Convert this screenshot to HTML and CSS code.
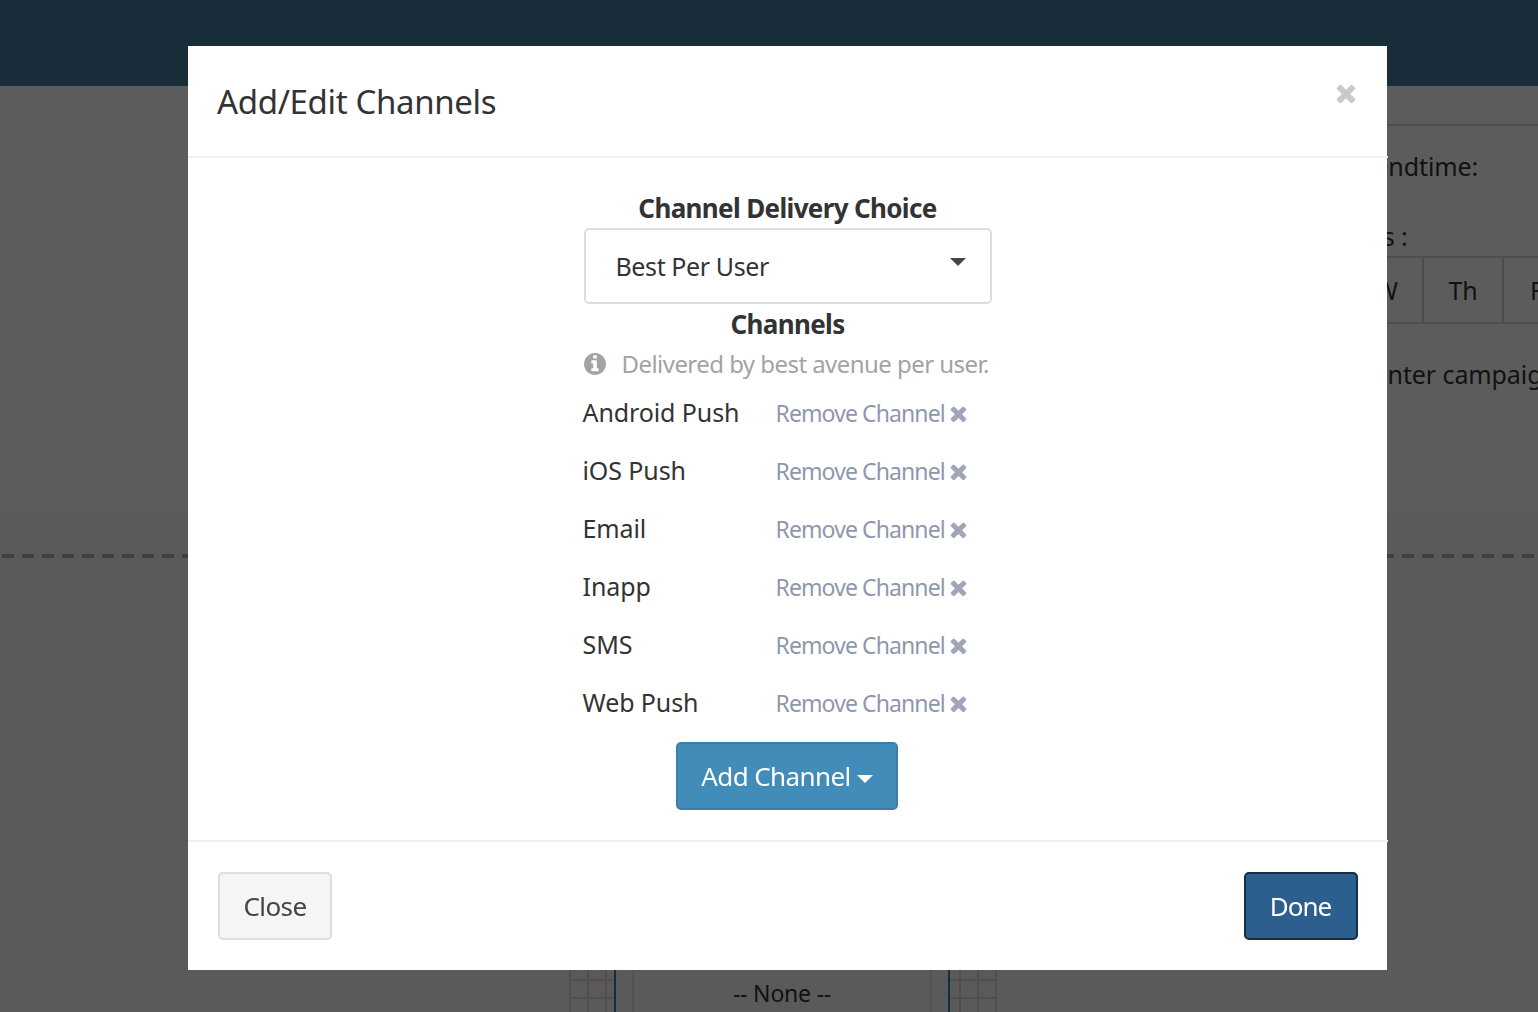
FILE: index.html
```html
<!DOCTYPE html>
<html lang="en">
<head>
<meta charset="utf-8">
<title>Add/Edit Channels</title>
<link rel="stylesheet" href="styles.css">
</head>
<body>
<svg class="defs" width="0" height="0" aria-hidden="true">
  <symbol id="i-times" viewBox="250 250 1292 1292"><path d="M1490 1322q0 40-28 68l-136 136q-28 28-68 28t-68-28l-294-294-294 294q-28 28-68 28t-68-28l-136-136q-28-28-28-68t28-68l294-294-294-294q-28-28-28-68t28-68l136-136q28-28 68-28t68 28l294 294 294-294q28-28 68-28t68 28l136 136q28 28 28 68t-28 68l-294 294 294 294q28 28 28 68z"/></symbol>
  <symbol id="i-info" viewBox="128 128 1536 1536"><path d="M1152 1376v-160q0-14-9-23t-23-9h-96v-512q0-14-9-23t-23-9h-320q-14 0-23 9t-9 23v160q0 14 9 23t23 9h96v320h-96q-14 0-23 9t-9 23v160q0 14 9 23t23 9h448q14 0 23-9t9-23zm-128-896v-160q0-14-9-23t-23-9h-192q-14 0-23 9t-9 23v160q0 14 9 23t23 9h192q14 0 23-9t9-23zm640 416q0 209-103 385.5t-279.5 279.5-385.5 103-385.5-103-279.5-279.5-103-385.5 103-385.5 279.5-279.5 385.5-103 385.5 103 279.5 279.5 103 385.5z"/></symbol>
</svg>

<div class="page">
  <header class="topbar"></header>
  <section class="upper">
    <div class="upper-panel">
      <p class="sendtime">Campaign sendtime:</p>
      <p class="days-label">Days :</p>
      <div class="days">
        <span class="day day-w">W</span>
        <span class="day day-th">Th</span>
        <span class="day day-f">F</span>
      </div>
      <p class="enter">Please enter campaign</p>
    </div>
  </section>
  <section class="lower">
    <div class="dashed"></div>
    <div class="lower-row">
      <div class="grid-cell"></div>
      <div class="gutter gutter-left"></div>
      <div class="none-box">-- None --</div>
      <div class="gutter gutter-right"></div>
      <div class="grid-cell grid-cell-right"></div>
    </div>
  </section>
</div>

<div class="overlay"></div>

<div class="modal-wrap">
  <div class="modal">
    <div class="modal-header">
      <h4 class="modal-title">Add/Edit Channels</h4>
      <button class="modal-close" type="button" aria-label="Close"><svg class="icon-close"><use href="#i-times"/></svg></button>
    </div>
    <div class="modal-body">
      <div class="channel-col">
        <h5 class="col-title">Channel Delivery Choice</h5>
        <div class="select"><span>Best Per User</span><i class="select-caret"></i></div>
        <h5 class="col-title channels-title">Channels</h5>
        <p class="hint"><svg class="icon-info"><use href="#i-info"/></svg><span>Delivered by best avenue per user.</span></p>
        <ul class="channels">
          <li class="channel"><span class="channel-name">Android Push</span><a class="remove">Remove Channel <svg class="icon-x"><use href="#i-times"/></svg></a></li>
          <li class="channel"><span class="channel-name">iOS Push</span><a class="remove">Remove Channel <svg class="icon-x"><use href="#i-times"/></svg></a></li>
          <li class="channel"><span class="channel-name">Email</span><a class="remove">Remove Channel <svg class="icon-x"><use href="#i-times"/></svg></a></li>
          <li class="channel"><span class="channel-name">Inapp</span><a class="remove">Remove Channel <svg class="icon-x"><use href="#i-times"/></svg></a></li>
          <li class="channel"><span class="channel-name">SMS</span><a class="remove">Remove Channel <svg class="icon-x"><use href="#i-times"/></svg></a></li>
          <li class="channel"><span class="channel-name">Web Push</span><a class="remove">Remove Channel <svg class="icon-x"><use href="#i-times"/></svg></a></li>
        </ul>
        <button class="btn btn-add" type="button">Add Channel<i class="btn-caret"></i></button>
      </div>
    </div>
    <div class="modal-footer">
      <button class="btn btn-close" type="button">Close</button>
      <button class="btn btn-done" type="button">Done</button>
    </div>
  </div>
</div>
</body>
</html>
```

FILE: styles.css
```css
* { box-sizing: border-box; }
html, body { margin: 0; padding: 0; height: 1012px; overflow: hidden; }
body {
  font-family: "Noto Sans", "Open Sans", sans-serif;
  font-size: 25px;
  letter-spacing: -0.1px;
  color: #333;
  background: #fff;
  position: relative;
}
.defs { position: absolute; }

.page { display: flex; flex-direction: column; height: 1012px; background: #fff; }
.topbar { height: 86px; flex: none; background: #457a9f; }
.upper { height: 428px; flex: none; display: flex; justify-content: flex-end; background: #fff; overflow: hidden; }
.upper-panel { width: 330px; padding-top: 38px; }
.upper-panel p { margin: 0; white-space: nowrap; color: #333; }
.sendtime { border-top: 2px solid #d4d4d4; padding-top: 23px; height: 97px; padding-left: 29px; }
.days-label { height: 35px; line-height: 30px; padding-left: 130px; }
.days { display: flex; height: 68px; border-top: 2px solid #d4d4d4; border-bottom: 2px solid #d4d4d4; align-items: center; }
.day { display: flex; align-items: center; justify-content: center; height: 100%; border-right: 2px solid #d4d4d4; flex: none; }
.day-w { width: 216px; justify-content: flex-end; padding-right: 24px; }
.day-th { width: 80px; }
.day-f { width: 34px; border-right: 0; justify-content: flex-start; padding-left: 26px; }
.enter { padding-top: 33px; padding-left: 84px; }

.lower { flex: 1; background: #fafafa; display: flex; flex-direction: column; justify-content: space-between; overflow: hidden; }
.dashed {
  margin-top: 40px;
  height: 4px;
  background: repeating-linear-gradient(90deg, #b0b0b0 0, #b0b0b0 12px, transparent 12px, transparent 20px) 2px 0;
}
.lower-row { display: flex; height: 42px; padding-left: 569px; }
.grid-cell {
  width: 45px;
  background-image:
    linear-gradient(#ecd6d6 2px, transparent 2px),
    linear-gradient(90deg, #ecd6d6 2px, transparent 2px);
  background-size: 18px 18px;
  background-position: 0 9px;
}
.grid-cell-right { width: 47px; background-position: 9px 9px; }
.gutter { width: 20px; }
.gutter-left { border-left: 2px solid #2f7fa8; border-right: 2px solid #e4e4e4; }
.gutter-right { border-left: 2px solid #e4e4e4; border-right: 2px solid #2f7fa8; }
.none-box { width: 296px; text-align: center; font-size: 23px; line-height: 46px; color: #333; letter-spacing: -0.2px; }

.overlay { position: fixed; inset: 0; background: rgba(0,0,0,.64); }

.modal-wrap { position: fixed; inset: 0; padding: 46px 151px 42px 188px; }
.modal { height: 924px; background: #fff; display: flex; flex-direction: column; }
.modal-header { height: 112px; border-bottom: 2px solid #f0f0f0; display: flex; justify-content: space-between; padding: 34px 32px 0 29px; margin-right: -1px; flex: none; }
.modal-title { margin: 0; font-size: 33px; font-weight: 400; line-height: 44px; color: #333; letter-spacing: -0.35px; }
.modal-close { border: 0; background: none; padding: 0; width: 20px; height: 20px; margin-top: 3px; line-height: 0; }
.icon-close { width: 20px; height: 20px; fill: #c9c9c9; }

.modal-body { flex: 1; display: flex; justify-content: center; }
.channel-col { width: 408px; display: flex; flex-direction: column; align-items: center; padding-top: 32px; }
.col-title { margin: 0; font-size: 26px; line-height: 36px; font-weight: 700; color: #333; letter-spacing: -0.65px; flex: none; }
.select { width: 408px; height: 76px; border: 2px solid #ddd; border-radius: 5px; display: flex; align-items: center; justify-content: space-between; padding: 0 24px 0 30px; color: #333; letter-spacing: -0.4px; margin-top: 2px; flex: none; }
.select-caret { width: 0; height: 0; border-left: 8px solid transparent; border-right: 8px solid transparent; border-top: 8px solid #444; margin-top: -8px; }
.channels-title { margin-top: 2px; }
.hint { margin: 0; width: 100%; display: flex; align-items: center; color: #a3a3a3; height: 41px; padding-top: 2px; font-size: 24px; letter-spacing: -0.55px; white-space: nowrap; flex: none; }
.icon-info { width: 22px; height: 22px; fill: #a3a3a3; margin-right: 16px; flex: none; }
.channels { list-style: none; margin: 0 0 0 -2px; padding: 0; width: 100%; flex: none; }
.channel { display: flex; align-items: center; height: 58px; }
.channel-name { width: 193px; flex: none; color: #333; }
.remove { font-size: 23px; color: #8f97ad; display: flex; align-items: center; white-space: pre; letter-spacing: -0.9px; margin-top: 2px; }
.icon-x { width: 17px; height: 17px; fill: #a0a6b8; margin-left: 0; }

.btn { font-family: inherit; font-size: 26px; letter-spacing: -0.6px; border-radius: 5px; height: 68px; padding: 0; cursor: pointer; }
.btn-add { width: 222px; background: #428cba; border: 2px solid #3b7ea8; color: #fff; margin: 11px 2px 0 0; flex: none; padding-left: 1px; }
.btn-caret { display: inline-block; width: 0; height: 0; border-left: 8px solid transparent; border-right: 8px solid transparent; border-top: 8px solid #fff; margin-left: 6px; vertical-align: middle; }

.modal-footer { height: 130px; border-top: 2px solid #f0f0f0; display: flex; justify-content: space-between; padding: 30px 30px 0 30px; flex: none; margin-right: -1px; }
.btn-close { width: 114px; background: #f5f5f5; border: 2px solid #ddd; color: #444; }
.btn-done { width: 114px; background: #2c5f8d; border: 2px solid #152e47; color: #fff; letter-spacing: -1px; padding-right: 1px; }
```
